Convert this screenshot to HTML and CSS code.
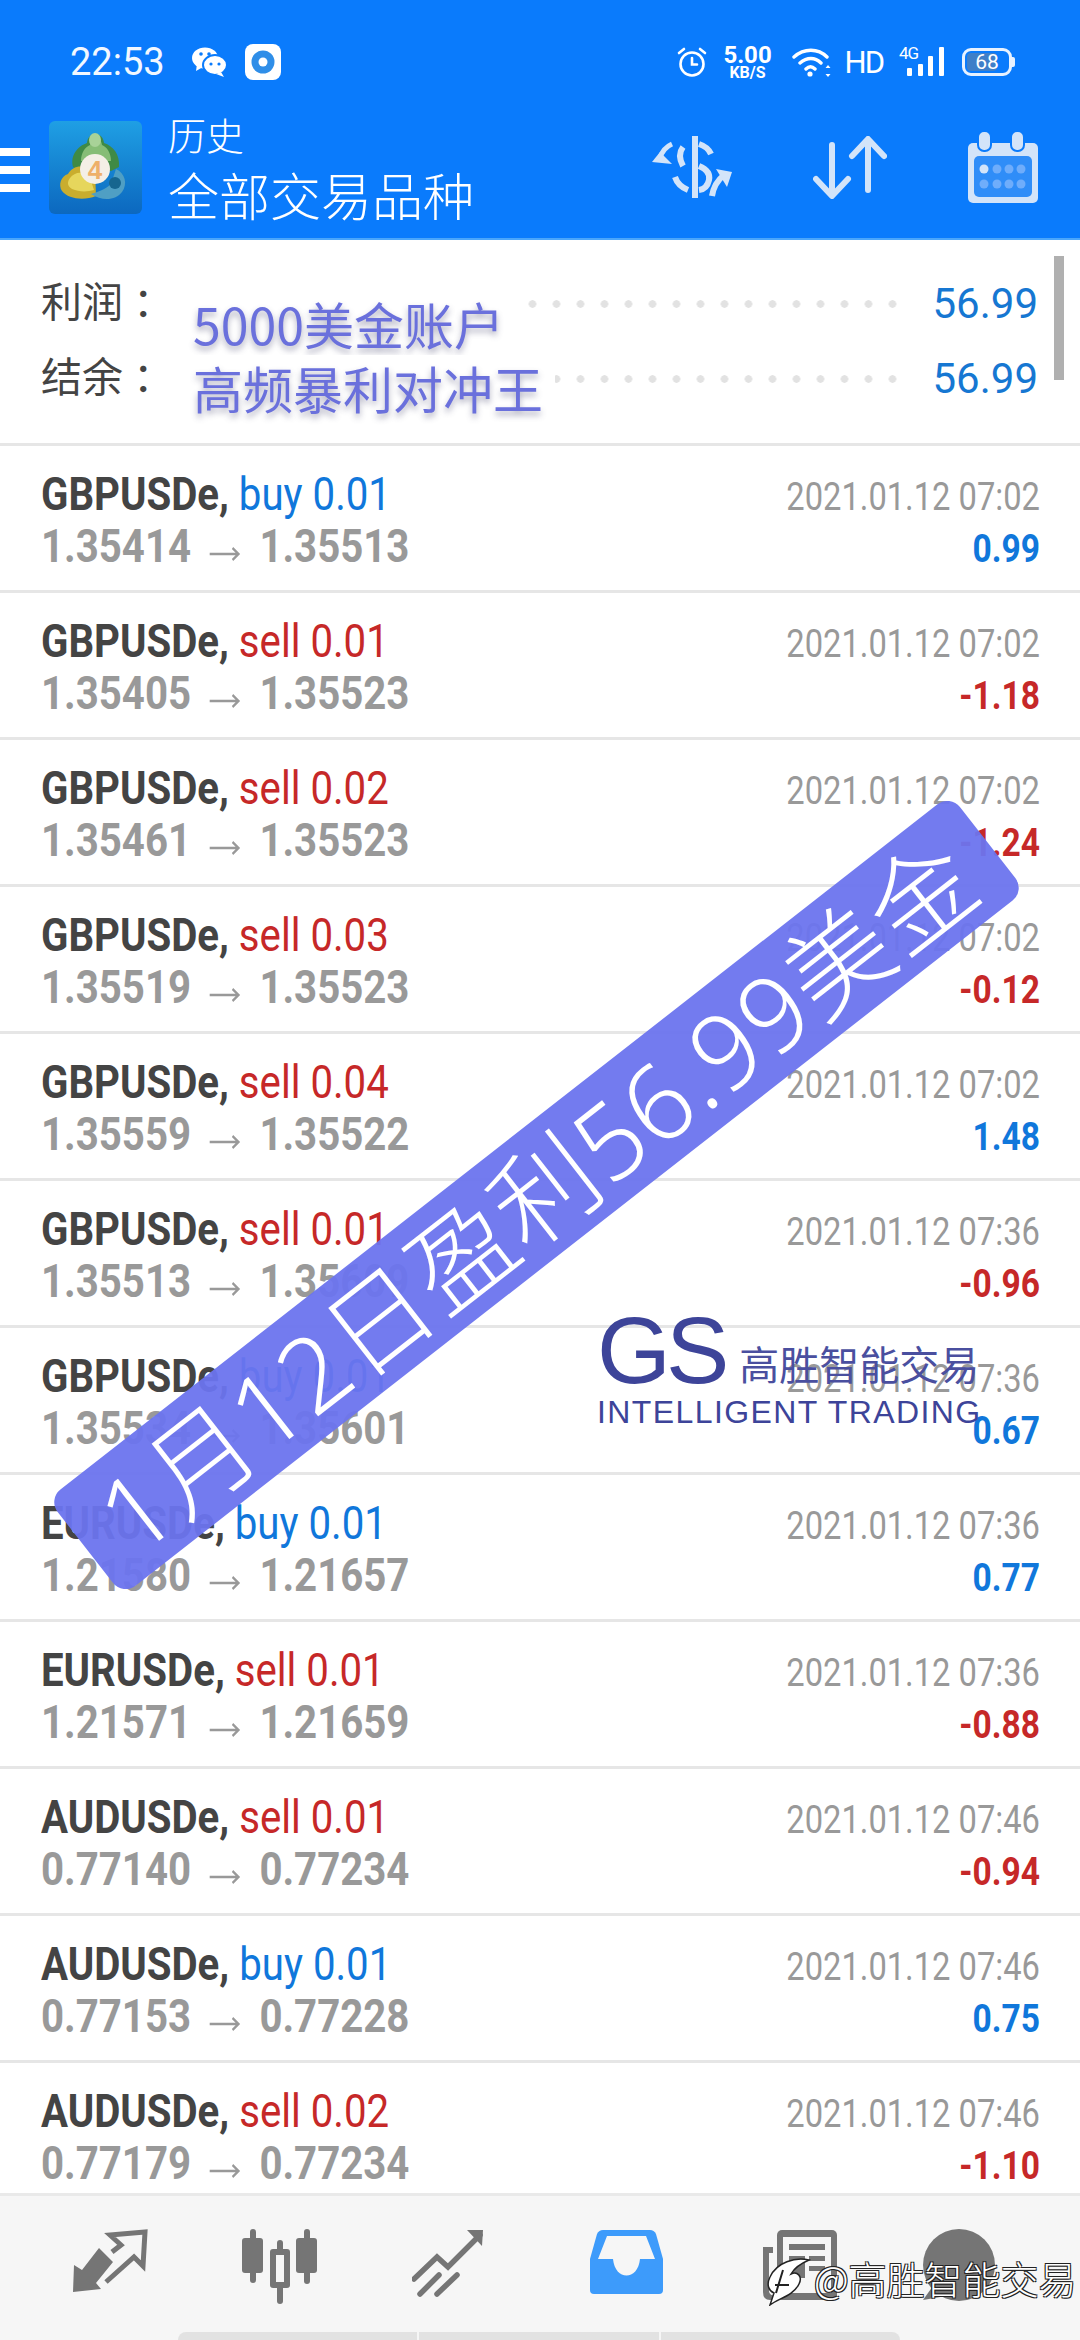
FILE: index.html
```html
<!DOCTYPE html>
<html lang="zh-CN">
<head>
  <meta charset="UTF-8">
  <meta name="viewport" content="width=device-width, initial-scale=1.0">
  <title>历史</title>
  <link rel="stylesheet" href="styles.css">
</head>
<body>
<div class="phone">
  <!-- Header -->
  <header class="header">
    <div class="status">
      <span class="clock">22:53</span>
      <svg class="ic-wechat" width="36" height="30" viewBox="0 0 36 30"><ellipse cx="13" cy="11" rx="13" ry="10.5" fill="#fff"/><path d="M5 17l-1 7 7-4z" fill="#fff"/><ellipse cx="23" cy="18" rx="12" ry="10" fill="#fff" stroke="#0a7bfc" stroke-width="2"/><path d="M29 25l3 5-8-3z" fill="#fff"/><circle cx="9" cy="7" r="1.8" fill="#0a7bfc"/><circle cx="17" cy="7" r="1.8" fill="#0a7bfc"/><circle cx="19" cy="17" r="1.6" fill="#0a7bfc"/><circle cx="27" cy="17" r="1.6" fill="#0a7bfc"/></svg>
      <svg class="ic-app" width="36" height="36" viewBox="0 0 36 36"><rect width="36" height="36" rx="8" fill="#fff"/><circle cx="18" cy="18" r="11.5" fill="#2f8ee8"/><circle cx="18" cy="18" r="4.5" fill="#fff"/></svg>
      <div class="status-right">
        <svg width="30" height="30" viewBox="0 0 30 30" fill="none" stroke="#fff" stroke-width="2.6" stroke-linecap="round"><circle cx="15" cy="17" r="11.5"/><path d="M15 11v6.5h5M2 6l5-4M28 6l-5-4"/></svg>
        <div class="speed"><b>5.00</b><b class="speed-unit">KB/S</b></div>
        <svg class="ic-wifi" width="40" height="30" viewBox="0 0 40 30" fill="none" stroke="#fff" stroke-width="3.4" stroke-linecap="round"><path d="M2 10c10-9 24-9 33 0M8 16c7-6 15-6 21 0M14 22c3-3 6-3 9 0"/><circle cx="18" cy="27" r="2.6" fill="#fff" stroke="none"/><path d="M36 18l-2.500 3h5zM36 30l-2.500-3h5z" fill="#fff" stroke="none"/></svg>
        <span class="hd">HD</span>
        <div class="signal">
          <span class="net">4G</span>
          <svg width="46" height="30" viewBox="0 0 46 30" fill="#fff"><rect x="8" y="21" width="5" height="8" rx="1"/><rect x="19" y="17" width="5" height="12" rx="1"/><rect x="29" y="9" width="5" height="20" rx="1"/><rect x="40" y="0" width="5" height="29" rx="1"/></svg>
        </div>
        <div class="battery"><span class="battery-fill"></span><span class="battery-num">68</span></div>
      </div>
    </div>
    <div class="toolbar">
      <div class="burger"><i></i><i></i><i></i></div>
      <svg class="logo" width="93" height="93" viewBox="0 0 93 93">
        <defs><linearGradient id="lg" x1="0" y1="0" x2="0" y2="1"><stop offset="0" stop-color="#1f9fe4"/><stop offset="1" stop-color="#0c68bf"/></linearGradient></defs>
        <rect width="93" height="93" rx="6" fill="url(#lg)"/>
        <path d="M24 46c-3-12 5-21 14-24 1-12 16-12 17 0 9 3 16 11 15 24l-8 4H30z" fill="#3f8a45"/>
        <path d="M32 40c0-8 4-14 9-16 1-9 11-9 12 0 5 2 9 8 9 16z" fill="#86bd76"/>
        <ellipse cx="46" cy="19" rx="6" ry="7" fill="#a8d298"/>
        <path d="M46 50c-12-7-22-6-27 3-7 2-10 11-6 17 6 8 22 10 34 5z" fill="#c9ad2e"/>
        <path d="M40 54c-9-4-15-2-19 3-3 4-3 8 2 11 7 3 15 3 22 1z" fill="#e6d65c"/>
        <path d="M42 73c12 8 25 6 31-2 6-8 3-19-6-23l-5 15c-6 6-14 8-20 10z" fill="#4f9fc4"/>
        <circle cx="66" cy="62" r="6" fill="#17668f"/>
        <circle cx="46" cy="48" r="15" fill="#f4efe6"/>
        <text class="logo-four" x="46" y="58" text-anchor="middle">4</text>
      </svg>
      <div class="titles">
        <span class="title-small">历史</span>
        <span class="title-big">全部交易品种</span>
      </div>
      <div class="actions">
        <svg width="80" height="62" viewBox="0 0 80 62" fill="none" stroke="#d3e4f9" stroke-width="6"><path d="M43 0v62" stroke-linecap="round"/><path d="M47 8q9 3 12 10M47 30q12 5 10 14t-10 10"/><path d="M31 11q-6 8 0 19M23 41q3 9 13 13"/><path d="M20 8Q11 12 8 22" stroke-width="5"/><path d="M0 26l8-10 12 12z" fill="#d3e4f9" stroke="none"/><path d="M60 60q2-13 12-21" stroke-width="6"/><path d="M64 33l16 3-5 15z" fill="#d3e4f9" stroke="none"/></svg>
        <svg width="74" height="63" viewBox="0 0 74 63" fill="none" stroke="#d3e4f9" stroke-width="6" stroke-linecap="round" stroke-linejoin="round"><path d="M19 9v50M3 43l16 17 16-17M55 4v50M39 20L55 3l16 17"/></svg>
        <svg width="70" height="72" viewBox="0 0 70 72"><rect y="12" width="70" height="60" rx="5" fill="#d3e4f9"/><rect x="6" y="25" width="58" height="41" rx="5" fill="#2f8df8"/><rect x="10" y="0" width="13" height="20" rx="6" fill="#d3e4f9" stroke="#0a7bfc" stroke-width="2"/><rect x="43" y="0" width="13" height="20" rx="6" fill="#d3e4f9" stroke="#0a7bfc" stroke-width="2"/><g fill="#6fadfb"><circle cx="16" cy="38" r="4.500" fill="#d3e4f9"/><circle cx="29" cy="38" r="4.500"/><circle cx="41" cy="38" r="4.500"/><circle cx="53" cy="38" r="4.500"/><circle cx="16" cy="53" r="4.500"/><circle cx="29" cy="53" r="4.500"/><circle cx="41" cy="53" r="4.500"/><circle cx="53" cy="53" r="4.500"/></g></svg>
      </div>
    </div>
  </header>

  <!-- Liste -->
  <main class="content">
    <section class="summary">
      <div class="sum-line"><span class="sum-label">利润<span class="colon">：</span></span><span class="dots"></span><span class="sum-value">56.99</span></div>
      <div class="sum-line"><span class="sum-label">结余<span class="colon">：</span></span><span class="dots"></span><span class="sum-value">56.99</span></div>
    </section>

    <div class="row">
      <div class="line-a squeeze"><b>GBPUSDe,</b> <span class="up">buy 0.01</span></div>
      <div class="time squeeze-r">2021.01.12 07:02</div>
      <div class="line-b squeeze"><span>1.35414</span><svg class="arrow" width="36" height="16" viewBox="0 0 36 16"><path d="M0 8h34M27 2l7 6-7 6" fill="none" stroke="#999" stroke-width="2.500"/></svg><span>1.35513</span></div>
      <div class="money up squeeze-r">0.99</div>
    </div>
    <div class="row">
      <div class="line-a squeeze"><b>GBPUSDe,</b> <span class="down">sell 0.01</span></div>
      <div class="time squeeze-r">2021.01.12 07:02</div>
      <div class="line-b squeeze"><span>1.35405</span><svg class="arrow" width="36" height="16" viewBox="0 0 36 16"><path d="M0 8h34M27 2l7 6-7 6" fill="none" stroke="#999" stroke-width="2.500"/></svg><span>1.35523</span></div>
      <div class="money down squeeze-r">-1.18</div>
    </div>
    <div class="row">
      <div class="line-a squeeze"><b>GBPUSDe,</b> <span class="down">sell 0.02</span></div>
      <div class="time squeeze-r">2021.01.12 07:02</div>
      <div class="line-b squeeze"><span>1.35461</span><svg class="arrow" width="36" height="16" viewBox="0 0 36 16"><path d="M0 8h34M27 2l7 6-7 6" fill="none" stroke="#999" stroke-width="2.500"/></svg><span>1.35523</span></div>
      <div class="money down squeeze-r">-1.24</div>
    </div>
    <div class="row">
      <div class="line-a squeeze"><b>GBPUSDe,</b> <span class="down">sell 0.03</span></div>
      <div class="time squeeze-r">2021.01.12 07:02</div>
      <div class="line-b squeeze"><span>1.35519</span><svg class="arrow" width="36" height="16" viewBox="0 0 36 16"><path d="M0 8h34M27 2l7 6-7 6" fill="none" stroke="#999" stroke-width="2.500"/></svg><span>1.35523</span></div>
      <div class="money down squeeze-r">-0.12</div>
    </div>
    <div class="row">
      <div class="line-a squeeze"><b>GBPUSDe,</b> <span class="down">sell 0.04</span></div>
      <div class="time squeeze-r">2021.01.12 07:02</div>
      <div class="line-b squeeze"><span>1.35559</span><svg class="arrow" width="36" height="16" viewBox="0 0 36 16"><path d="M0 8h34M27 2l7 6-7 6" fill="none" stroke="#999" stroke-width="2.500"/></svg><span>1.35522</span></div>
      <div class="money up squeeze-r">1.48</div>
    </div>
    <div class="row">
      <div class="line-a squeeze"><b>GBPUSDe,</b> <span class="down">sell 0.01</span></div>
      <div class="time squeeze-r">2021.01.12 07:36</div>
      <div class="line-b squeeze"><span>1.35513</span><svg class="arrow" width="36" height="16" viewBox="0 0 36 16"><path d="M0 8h34M27 2l7 6-7 6" fill="none" stroke="#999" stroke-width="2.500"/></svg><span>1.35609</span></div>
      <div class="money down squeeze-r">-0.96</div>
    </div>
    <div class="row">
      <div class="line-a squeeze"><b>GBPUSDe,</b> <span class="up">buy 0.01</span></div>
      <div class="time squeeze-r">2021.01.12 07:36</div>
      <div class="line-b squeeze"><span>1.35534</span><svg class="arrow" width="36" height="16" viewBox="0 0 36 16"><path d="M0 8h34M27 2l7 6-7 6" fill="none" stroke="#999" stroke-width="2.500"/></svg><span>1.35601</span></div>
      <div class="money up squeeze-r">0.67</div>
    </div>
    <div class="row">
      <div class="line-a squeeze"><b>EURUSDe,</b> <span class="up">buy 0.01</span></div>
      <div class="time squeeze-r">2021.01.12 07:36</div>
      <div class="line-b squeeze"><span>1.21580</span><svg class="arrow" width="36" height="16" viewBox="0 0 36 16"><path d="M0 8h34M27 2l7 6-7 6" fill="none" stroke="#999" stroke-width="2.500"/></svg><span>1.21657</span></div>
      <div class="money up squeeze-r">0.77</div>
    </div>
    <div class="row">
      <div class="line-a squeeze"><b>EURUSDe,</b> <span class="down">sell 0.01</span></div>
      <div class="time squeeze-r">2021.01.12 07:36</div>
      <div class="line-b squeeze"><span>1.21571</span><svg class="arrow" width="36" height="16" viewBox="0 0 36 16"><path d="M0 8h34M27 2l7 6-7 6" fill="none" stroke="#999" stroke-width="2.500"/></svg><span>1.21659</span></div>
      <div class="money down squeeze-r">-0.88</div>
    </div>
    <div class="row">
      <div class="line-a squeeze"><b>AUDUSDe,</b> <span class="down">sell 0.01</span></div>
      <div class="time squeeze-r">2021.01.12 07:46</div>
      <div class="line-b squeeze"><span>0.77140</span><svg class="arrow" width="36" height="16" viewBox="0 0 36 16"><path d="M0 8h34M27 2l7 6-7 6" fill="none" stroke="#999" stroke-width="2.500"/></svg><span>0.77234</span></div>
      <div class="money down squeeze-r">-0.94</div>
    </div>
    <div class="row">
      <div class="line-a squeeze"><b>AUDUSDe,</b> <span class="up">buy 0.01</span></div>
      <div class="time squeeze-r">2021.01.12 07:46</div>
      <div class="line-b squeeze"><span>0.77153</span><svg class="arrow" width="36" height="16" viewBox="0 0 36 16"><path d="M0 8h34M27 2l7 6-7 6" fill="none" stroke="#999" stroke-width="2.500"/></svg><span>0.77228</span></div>
      <div class="money up squeeze-r">0.75</div>
    </div>
    <div class="row">
      <div class="line-a squeeze"><b>AUDUSDe,</b> <span class="down">sell 0.02</span></div>
      <div class="time squeeze-r">2021.01.12 07:46</div>
      <div class="line-b squeeze"><span>0.77179</span><svg class="arrow" width="36" height="16" viewBox="0 0 36 16"><path d="M0 8h34M27 2l7 6-7 6" fill="none" stroke="#999" stroke-width="2.500"/></svg><span>0.77234</span></div>
      <div class="money down squeeze-r">-1.10</div>
    </div>
  </main>

  <!-- Barre du bas -->
  <nav class="bottom-nav">
    <div class="nav-icons">
      <svg width="76" height="66" viewBox="0 0 76 66"><path d="M1 63L2 36 10 41 27 19 41 33 24 54 29 60z" fill="#757575"/><path d="M34 53L62 28 71 37 73 3 38 6 49 16 40 23" fill="none" stroke="#757575" stroke-width="5"/></svg>
      <svg width="78" height="76" viewBox="0 0 78 76" fill="#757575"><rect x="1" y="9" width="21" height="35" rx="3"/><rect x="9" y="0" width="6" height="54" rx="3"/><rect x="36" y="11" width="6" height="64" rx="3"/><rect x="29" y="20" width="20" height="39" rx="3"/><rect x="35" y="26" width="8" height="27" fill="#f6f6f6"/><rect x="55" y="9" width="21" height="35" rx="3"/><rect x="63" y="0" width="6" height="55" rx="3"/></svg>
      <svg width="74" height="68" viewBox="0 0 74 68" fill="none" stroke="#757575" stroke-width="5.500"><path d="M2 50L25 28 36 38 68 6" stroke-linecap="round"/><path d="M55 1H71L70 17z" fill="#757575" stroke="none"/><path d="M8 65L27 46M25 65L45 46" stroke-linecap="round"/></svg>
      <svg class="nav-tray" width="74" height="66" viewBox="0 0 74 66"><path d="M13 1H60Q64 1 66 5L73 30V61Q73 65 69 65H4Q0 65 0 61V30L7 5Q9 1 13 1z" fill="#3d9bfb"/><path d="M17 7H56L65 30H50C48 52 25 52 23 30H8z" fill="#f6f6f6"/></svg>
      <svg class="nav-news" width="76" height="72" viewBox="0 0 76 72"><rect x="15" y="1" width="60" height="70" rx="5" fill="#757575"/><rect x="21" y="8" width="48" height="56" fill="#f6f6f6"/><rect x="27" y="15" width="36" height="6" fill="#757575"/><rect x="27" y="27" width="16" height="22" fill="#757575"/><rect x="47" y="27" width="16" height="5" fill="#757575"/><rect x="47" y="37" width="16" height="5" fill="#757575"/><path d="M1 18h10v6H7v38q0 5 8 5v4H8q-7 0-7-8z" fill="#757575"/></svg>
      <svg class="nav-chat" width="74" height="73" viewBox="0 0 74 73"><circle cx="37" cy="36" r="36" fill="#757575"/><path d="M1 71L16 50 30 66z" fill="#757575"/></svg>
    </div>
    <div class="gesture"><i></i><i></i><i></i></div>
  </nav>

  <!-- Texte posé sur la capture -->
  <div class="sticker-note">
    <span>5000美金账户</span>
    <span>高频暴利对冲王</span>
  </div>
  <div class="gs-logo">
    <div class="gs-top"><span class="gs-mark">GS</span><span class="gs-cn">高胜智能交易</span></div>
    <div class="gs-en">INTELLIGENT TRADING</div>
  </div>
  <div class="banner">1月12日盈利56.99美金</div>
  <div class="scrollbar"></div>
  <div class="watermark">
    <svg width="46" height="48" viewBox="0 0 46 48"><path d="M44 2C30-1 12 4 5 19 1 27 4 33 9 35L5 47C14 40 28 38 34 26 38 18 32 13 26 16 30 9 37 5 44 2z" fill="#fff" stroke="#222" stroke-width="1.500"/><path d="M10 27h14M18 12L11 35" fill="none" stroke="#222" stroke-width="2"/></svg>
    <span>@高胜智能交易</span>
  </div>
</div>
</body>
</html>
```

FILE: styles.css
```css
* {
  margin: 0;
  padding: 0;
  box-sizing: border-box;
}

body {
  width: 1080px;
  height: 2340px;
  overflow: hidden;
  background: #fff;
  font-family: Roboto, "Noto Sans CJK SC", sans-serif;
}

.phone {
  position: relative;
  width: 1080px;
  height: 2340px;
  overflow: hidden;
  display: flex;
  flex-direction: column;
}

/* Header */
.header {
  height: 240px;
  flex-shrink: 0;
  background: #0a7bfc;
  border-bottom: 2px solid #4aa6fb;
  color: #fff;
}

.status {
  height: 110px;
  padding: 14px 68px 0 70px;
  display: flex;
  align-items: center;
}

.clock {
  font-size: 38px;
  color: #f2f8ff;
}

.ic-wechat {
  margin-left: 27px;
}

.ic-app {
  margin-left: 17px;
}

.status-right {
  margin-left: auto;
  display: flex;
  align-items: center;
}

.speed {
  margin-left: 16px;
  width: 50px;
  display: flex;
  flex-direction: column;
  align-items: center;
  font-size: 24px;
  line-height: 20px;
}

.speed-unit {
  font-size: 16px;
  line-height: 15px;
}

.ic-wifi {
  margin-left: 19px;
}

.hd {
  margin-left: 13px;
  font-size: 31px;
  letter-spacing: -2px;
}

.signal {
  position: relative;
  margin-left: 16px;
  width: 46px;
  height: 30px;
}

.net {
  position: absolute;
  left: 0;
  top: -3px;
  font-size: 17px;
  line-height: 18px;
  letter-spacing: -1px;
}

.battery {
  position: relative;
  margin-left: 17px;
  width: 50px;
  height: 28px;
  border: 3px solid #e8f2ff;
  border-radius: 9px;
  display: flex;
  align-items: center;
  justify-content: center;
}

.battery::after {
  content: "";
  position: absolute;
  right: -6px;
  top: 6px;
  width: 3px;
  height: 10px;
  background: #e8f2ff;
  border-radius: 0 2px 2px 0;
}

.battery-fill {
  position: absolute;
  left: 2px;
  top: 2px;
  bottom: 2px;
  width: 30px;
  background: #3f7fc8;
  border-radius: 4px;
}

.battery-num {
  position: relative;
  font-size: 21px;
  line-height: 22px;
}

.toolbar {
  height: 114px;
  display: flex;
  align-items: center;
}

.burger {
  width: 30px;
  display: flex;
  flex-direction: column;
  gap: 10px;
  margin-top: 6px;
}

.burger i {
  display: block;
  height: 8px;
  background: #fff;
}

.logo {
  margin-left: 19px;
  flex-shrink: 0;
}

.logo-four {
  font-family: "Liberation Sans", sans-serif;
  font-size: 26px;
  font-weight: bold;
  fill: #eeb06a;
}

.titles {
  margin-left: 26px;
  margin-top: 16px;
  display: flex;
  flex-direction: column;
  font-family: "Noto Sans CJK SC", sans-serif;
  font-weight: 300;
}

.title-small {
  font-size: 38px;
  line-height: 38px;
}

.title-big {
  font-size: 51px;
  line-height: 82px;
}

.actions {
  margin-left: auto;
  padding-right: 42px;
  display: flex;
  align-items: center;
  gap: 81px;
}

/* Liste */
.content {
  flex: 1;
  overflow: hidden;
  background: #fff;
}

.summary {
  height: 206px;
  padding: 26px 42px 0 41px;
  border-bottom: 3px solid #e6e6e6;
}

.sum-line {
  height: 75px;
  display: flex;
  align-items: center;
}

.sum-label {
  width: 125px;
  margin-bottom: 10px;
  font-family: "Noto Sans CJK SC", sans-serif;
  font-size: 41px;
  color: #444;
  flex-shrink: 0;
  white-space: nowrap;
}

.colon {
  margin-left: 10px;
}

.dots {
  flex: 1;
  height: 8px;
  margin: 0 28px 0 200px;
  background: radial-gradient(circle, #e2e2e2 3.500px, transparent 4px) right center / 24px 8px repeat-x;
}

.sum-value {
  font-size: 42px;
  color: #1677d2;
}

.row {
  height: 147px;
  padding: 22px 40px 0 41px;
  border-bottom: 3px solid #e6e6e6;
  display: grid;
  grid-template-columns: 1fr auto;
  grid-auto-rows: 52px;
  align-items: baseline;
}

.squeeze {
  transform: scaleX(0.855);
  transform-origin: left center;
  white-space: nowrap;
}

.squeeze-r {
  transform: scaleX(0.86);
  transform-origin: right center;
  white-space: nowrap;
  text-align: right;
}

.line-a,
.line-b {
  font-size: 47px;
  line-height: 52px;
}

.line-a b {
  color: #444;
}

.line-b {
  display: flex;
  align-items: baseline;
  gap: 22px;
  font-weight: bold;
  color: #999;
}

.arrow {
  flex-shrink: 0;
}

.time {
  font-size: 38px;
  color: #999;
}

.money {
  font-size: 39px;
  font-weight: bold;
}

.up {
  color: #1077db;
}

.down {
  color: #c62828;
}

/* Barre du bas */
.bottom-nav {
  height: 147px;
  flex-shrink: 0;
  background: #f6f6f6;
  border-top: 3px solid #e9e9e9;
  display: flex;
  flex-direction: column;
}

.nav-icons {
  padding: 33px 0 0 72px;
  display: flex;
  align-items: flex-start;
  gap: 93px;
}

.nav-tray {
  margin-left: 11px;
}

.nav-news {
  margin-left: 5px;
}

.nav-chat {
  margin-left: -9px;
}

.gesture {
  margin: auto 180px 0 178px;
  height: 8px;
  display: flex;
  gap: 2px;
}

.gesture i {
  flex: 1;
  background: #e2e2e2;
}

.gesture i:first-child {
  border-radius: 8px 0 0 0;
}

.gesture i:last-child {
  border-radius: 0 8px 0 0;
}

/* Texte posé sur la capture */
.sticker-note {
  position: absolute;
  left: 189px;
  top: 291px;
  display: flex;
  flex-direction: column;
  align-items: flex-start;
  font-family: "Noto Sans CJK SC", sans-serif;
  font-size: 50px;
  line-height: 64px;
  color: #6a70dc;
  text-shadow: 0 4px 6px rgba(70, 70, 110, 0.45);
}

.sticker-note span {
  padding: 0 12px 0 4px;
  background: #fff;
}

.gs-logo {
  position: absolute;
  left: 597px;
  top: 1300px;
  color: #3d4499;
  font-family: "Liberation Sans", sans-serif;
}

.gs-top {
  display: flex;
  align-items: flex-end;
}

.gs-mark {
  font-size: 95px;
  line-height: 100px;
  letter-spacing: -5px;
}

.gs-cn {
  margin: 0 0 13px 15px;
  font-family: "Noto Sans CJK SC", sans-serif;
  font-size: 40px;
  line-height: 48px;
  color: #4a4f9f;
}

.gs-en {
  margin-top: -5px;
  font-size: 32px;
  line-height: 34px;
  letter-spacing: 1.4px;
}

.banner {
  position: absolute;
  left: -36px;
  top: 1134px;
  width: 1145px;
  height: 122px;
  transform: rotate(-38deg);
  background: rgba(108, 116, 238, 0.95);
  border-radius: 16px;
  color: #fff;
  font-family: "Noto Sans", "Noto Sans CJK SC", sans-serif;
  font-size: 104px;
  font-weight: 300;
  letter-spacing: 1px;
  line-height: 122px;
  white-space: nowrap;
  text-align: center;
}

.scrollbar {
  position: absolute;
  right: 16px;
  top: 256px;
  width: 10px;
  height: 124px;
  background: #b0b0b0;
}

.watermark {
  position: absolute;
  left: 765px;
  top: 2258px;
  display: flex;
  align-items: flex-start;
  gap: 3px;
  font-family: "Noto Sans CJK SC", sans-serif;
  font-size: 38px;
  line-height: 40px;
  font-weight: 300;
  color: #fff;
  white-space: nowrap;
  text-shadow: 1px 1px 0 #222, -1px 1px 0 #222, 1px -1px 0 #222, -1px -1px 0 #222;
}
```
